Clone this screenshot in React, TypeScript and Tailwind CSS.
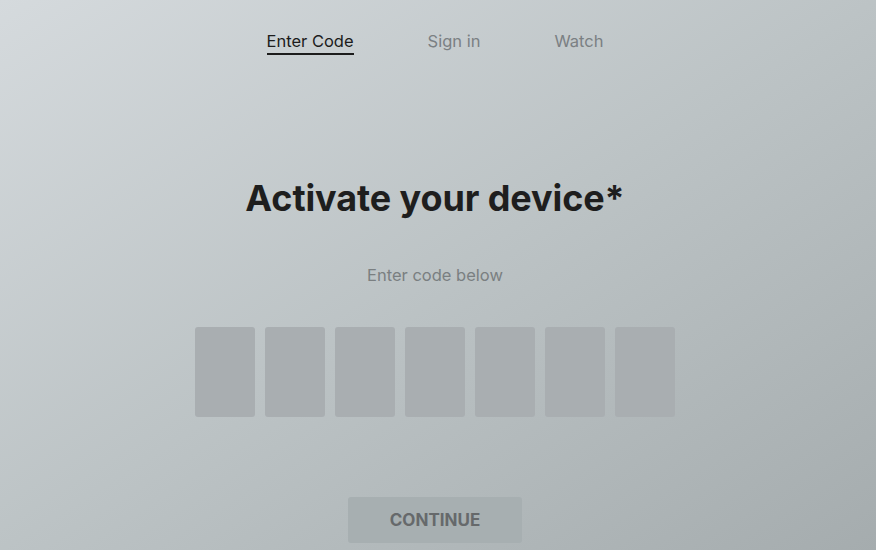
import React from 'react';

const tabs = ['Enter Code', 'Sign in', 'Watch'];

export default function App() {
  return (
    <main
      className="w-full h-[550px] overflow-hidden bg-gradient-to-br from-[#d5dadd] via-[#bcc3c5] to-[#a5acae] flex flex-col items-center pr-[6px]"
      style={{ fontFamily: 'Inter, "Noto Sans", sans-serif' }}
    >
      <nav className="flex flex-row gap-[74px] mt-[30px]">
        {tabs.map((t, i) => (
          <div
            key={t}
            className={
              i === 0
                ? 'text-[16.5px] leading-[22px] text-[#1c1c1c] border-b-2 border-[#1c1c1c] pb-[1px]'
                : 'text-[16.5px] leading-[22px] text-[#7b8083] pb-[3px]'
            }
          >
            {t}
          </div>
        ))}
      </nav>

      <h1 className="mt-[121px] text-[36px] leading-[44px] font-bold text-[#1e1e1e] tracking-[-0.1px]">
        Activate your device*
      </h1>

      <p className="mt-[44px] text-[16.5px] leading-[22px] text-[#7a7f81]">Enter code below</p>

      <div className="flex flex-row gap-[10px] mt-[41px]">
        {[0, 1, 2, 3, 4, 5, 6].map((n) => (
          <div key={n} className="w-[60px] h-[90px] rounded-[3px] bg-[#a9aeb1]" />
        ))}
      </div>

      <button className="mt-[80px] w-[174px] h-[46px] pt-[2px] rounded-[3px] bg-[#a7afb1] text-[17px] font-bold text-[#66696b]">
        CONTINUE
      </button>
    </main>
  );
}
